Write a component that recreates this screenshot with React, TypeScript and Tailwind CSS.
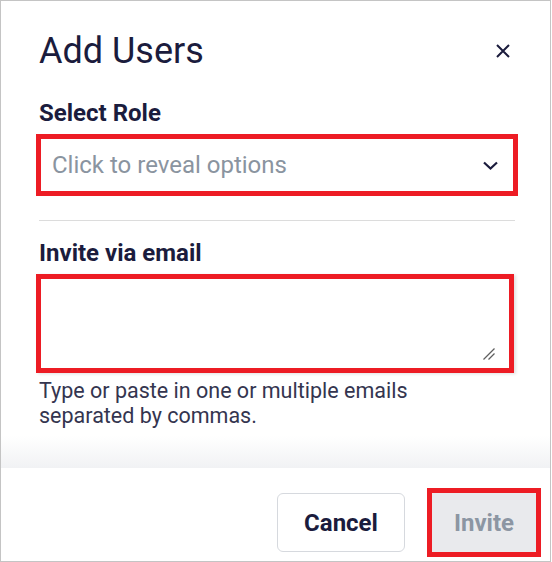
import React from "react";

const NAVY = "text-[#1b1c3d]";

function CloseIcon() {
  return (
    <svg width="14" height="14" viewBox="0 0 14 14" aria-hidden="true">
      <path d="M1 1 L13 13 M13 1 L1 13" stroke="#1b1c3d" strokeWidth="2" fill="none" />
    </svg>
  );
}

function Chevron() {
  return (
    <svg width="15" height="9" viewBox="0 0 15 9" aria-hidden="true">
      <path d="M1 1.5 L7.5 7.5 L14 1.5" stroke="#1b1c3d" strokeWidth="2.2" fill="none" />
    </svg>
  );
}

function ResizeHandle() {
  return (
    <svg width="12" height="12" viewBox="0 0 12 12" aria-hidden="true">
      <path d="M11.5 0.5 L0.5 11.5 M11.5 5.5 L5.5 11.5" stroke="#5f5f5f" strokeWidth="1.3" fill="none" />
    </svg>
  );
}

export default function App() {
  return (
    <div
      className="flex h-[562px] w-[551px] flex-col border border-[#c4c4c4] bg-white"
      style={{ fontFamily: "Roboto, 'Liberation Sans', sans-serif" }}
    >
      <div className="pl-[38px] pr-[35px] pt-[28px]">
        <div className="flex h-[44px] items-center justify-between">
          <h1 className={`text-[36px] font-normal leading-[44px] ${NAVY}`}>Add Users</h1>
          <button className="flex size-6 items-center justify-center">
            <CloseIcon />
          </button>
        </div>

        <p className={`mt-[24px] text-[24px] font-bold leading-[32px] ${NAVY}`}>Select Role</p>
        <div className="-mx-[3px] mt-[5px] flex h-[62px] items-center justify-between border-[5px] border-[#ed1c24] pl-[11px] pr-[15px]">
          <span className="text-[24px] leading-[32px] text-[#8a94a0]">Click to reveal options</span>
          <Chevron />
        </div>

        <div className="mt-[24px] h-px bg-[#dcdcdc]" />

        <p className={`mt-[16px] text-[24px] font-bold leading-[32px] ${NAVY}`}>Invite via email</p>
        <div className="relative -ml-[3px] mt-[5px] h-[99px] w-[478px] border-[5px] border-[#ed1c24] shadow-[2px_1px_3px_rgba(0,0,0,0.12)]">
          <div className="absolute bottom-[8px] right-[14px] flex">
            <ResizeHandle />
          </div>
        </div>

        <p className="mt-[5px] w-[410px] text-[21.5px] leading-[25px] text-[#34354f]">
          Type or paste in one or multiple emails separated by commas.
        </p>
      </div>

      <div className="h-[40px] bg-gradient-to-b from-white from-20% to-[#f1f2f4]" />

      <div className="flex flex-1 items-start justify-end gap-[22px] pr-[9px] pt-[20px]">
        <button
          className={`mt-[5px] h-[59px] w-[128px] rounded-[6px] border border-[#d6d9de] bg-white text-[24px] font-bold ${NAVY}`}
        >
          Cancel
        </button>
        <div className="border-[5px] border-[#ed1c24]">
          <button className="h-[59px] w-[104px] bg-[#e9eaed] text-[24px] font-bold text-[#8c96a3]">
            Invite
          </button>
        </div>
      </div>
    </div>
  );
}
